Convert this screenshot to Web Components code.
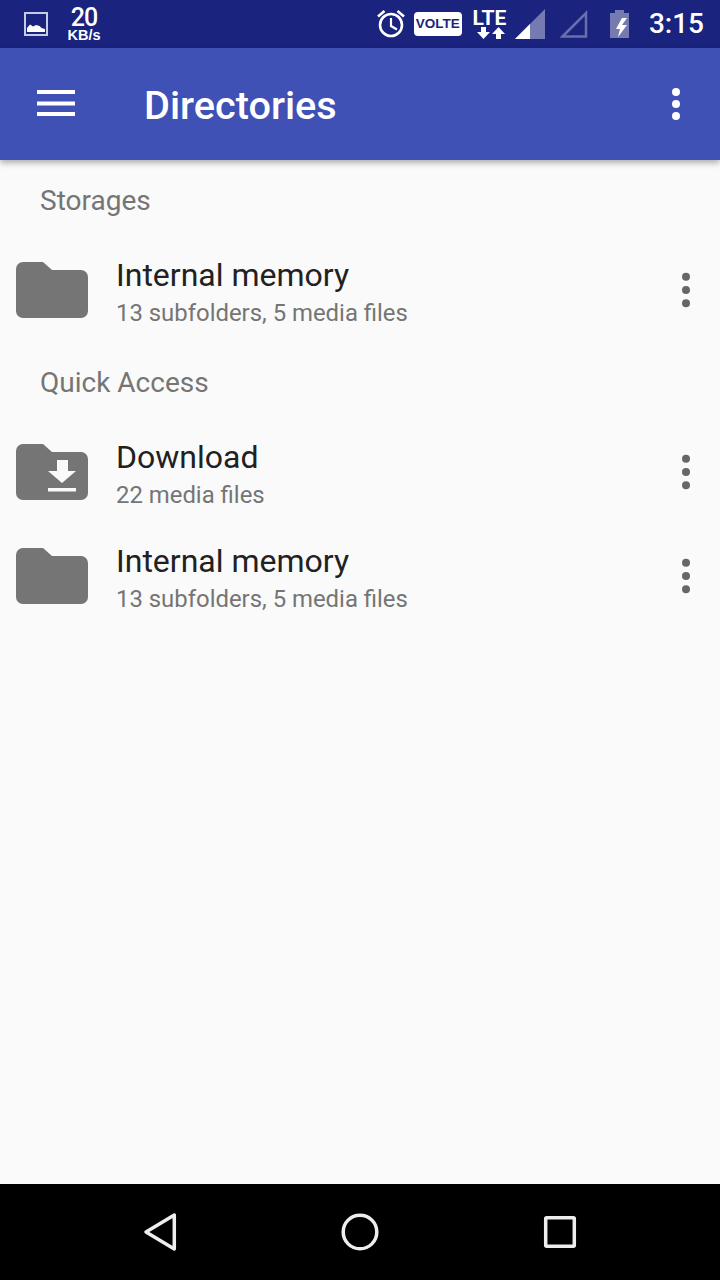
<!DOCTYPE html>
<html>
<head>
<meta charset="utf-8">
<title>Directories</title>
<style>
    html, body {
        margin: 0;
        padding: 0;
    }

    body {
        background: #fafafa;
        display: flex;
        flex-direction: column;
        font-family: Roboto, "Noto Sans", sans-serif;
        height: 1280px;
        overflow: hidden;
        width: 720px;
    }
</style>
</head>
<body>
    <status-bar></status-bar>
    <app-bar>Directories</app-bar>
    <dir-list>
        <section-label>Storages</section-label>
        <folder-row subtitle="13 subfolders, 5 media files">Internal memory</folder-row>
        <section-label>Quick Access</section-label>
        <folder-row icon="download" subtitle="22 media files">Download</folder-row>
        <folder-row subtitle="13 subfolders, 5 media files">Internal memory</folder-row>
    </dir-list>
    <nav-bar></nav-bar>

<script>
class StatusBar extends HTMLElement {
    constructor () {
        super()
        const shadowRoot = this.attachShadow({mode: 'open'})
        shadowRoot.innerHTML = this.render()
    }

    style () {
        return `
            <style>
                :host {
                    align-items: center;
                    background: #1a237e;
                    color: #fff;
                    display: flex;
                    flex: none;
                    height: 48px;
                }

                svg {
                    display: block;
                    flex: none;
                }

                .speed {
                    align-items: center;
                    display: flex;
                    flex-direction: column;
                    margin-left: 19px;
                    width: 34px;
                }

                .speed b {
                    font-size: 25px;
                    font-weight: 500;
                    letter-spacing: -1px;
                    line-height: 21px;
                }

                .speed small {
                    font-family: "Liberation Sans", sans-serif;
                    font-size: 14.500px;
                    font-weight: 700;
                    line-height: 14px;
                }

                .right {
                    align-items: center;
                    display: flex;
                    margin-left: auto;
                    padding-right: 16px;
                }

                .volte {
                    background: #fff;
                    border-radius: 4px;
                    box-sizing: border-box;
                    color: #1a237e;
                    font-family: "Liberation Sans", sans-serif;
                    font-size: 13.500px;
                    font-weight: 700;
                    height: 24px;
                    line-height: 24px;
                    margin-left: 9px;
                    text-align: center;
                    width: 48px;
                }

                .lte {
                    display: flex;
                    flex-direction: column;
                    margin-left: 10px;
                    width: 35px;
                }

                .lte span {
                    font-size: 21px;
                    font-weight: 700;
                    line-height: 18px;
                    text-align: center;
                }

                .time {
                    font-size: 28px;
                    font-weight: 500;
                    line-height: 32px;
                    margin-left: 19px;
                }
            </style>
        `
    }

    render () {
        return `
            ${this.style()}
            <svg style="margin-left:24px" width="24" height="24" viewBox="0 0 24 24">
                <rect x="1" y="1" width="22" height="22" fill="none" stroke="#c5cae9" stroke-width="2"/>
                <path d="M3 20v-4l3-3.500 3 2 3-1.500 3.500 1 2 2 3.500 1v3z" fill="#fff"/>
            </svg>
            <div class="speed"><b>20</b><small>KB/s</small></div>
            <div class="right">
                <svg width="28" height="28" viewBox="0 0 28 28" fill="none" stroke="#fff">
                    <circle cx="14" cy="15" r="11" stroke-width="2.600"/>
                    <path d="M14 8v8l6 3.500" stroke-width="2.200"/>
                    <path d="M1 6.500 7.500 1M27 6.500 20.500 1" stroke-width="2.600"/>
                </svg>
                <span class="volte">VOLTE</span>
                <div class="lte">
                    <span>LTE</span>
                    <svg width="35" height="13" viewBox="0 0 35 13" fill="#fff">
                        <path d="M9 0h5v5h4l-6.500 7L5 5h4z"/>
                        <path d="M24 12h5V7h4L26.500 0 20 7h4z"/>
                    </svg>
                </div>
                <svg style="margin-left:8px" width="30" height="30" viewBox="0 0 30 30" fill="#fff">
                    <path d="M0 30 30 0v30z" opacity=".4"/>
                    <path d="M0 30 15 15v15z"/>
                </svg>
                <svg style="margin-left:14px" width="30" height="30" viewBox="0 0 30 30" fill="none">
                    <path d="M3.500 27.500 27 4v23.500z" stroke="#fff" stroke-width="2.500" opacity=".35"/>
                </svg>
                <svg style="margin-left:21px" width="20" height="28" viewBox="0 0 20 28" fill="#fff">
                    <path d="M5 0h9v3h5v25H0V3h5z" opacity=".4"/>
                    <path d="M12 8 6 19h4l-2 8 9-12h-5l5-7z"/>
                </svg>
                <span class="time">3:15</span>
            </div>
        `
    }
}

class AppBar extends HTMLElement {
    constructor () {
        super()
        const shadowRoot = this.attachShadow({mode: 'open'})
        shadowRoot.innerHTML = this.render()
    }

    style () {
        return `
            <style>
                :host {
                    align-items: center;
                    background: #3f51b5;
                    box-shadow: 0 3px 6px rgba(0,0,0,.3);
                    color: #fff;
                    display: flex;
                    flex: none;
                    height: 112px;
                    position: relative;
                    z-index: 1;
                }

                svg {
                    display: block;
                    flex: none;
                }

                .title {
                    font-size: 39.700px;
                    font-weight: 500;
                    line-height: 48px;
                    margin-left: 69px;
                    margin-top: 4px;
                }

                .more {
                    margin-left: auto;
                    margin-right: 40px;
                }
            </style>
        `
    }

    render () {
        return `
            ${this.style()}
            <svg style="margin:0 0 2px 37px" width="38" height="26" viewBox="0 0 38 26" fill="#fff">
                <rect y="0" width="38" height="4"/>
                <rect y="11.500" width="38" height="4"/>
                <rect y="22" width="38" height="4"/>
            </svg>
            <div class="title"><slot></slot></div>
            <svg class="more" width="8" height="32" viewBox="0 0 8 32" fill="#fff">
                <circle cx="4" cy="4" r="4"/>
                <circle cx="4" cy="16" r="4"/>
                <circle cx="4" cy="28" r="4"/>
            </svg>
        `
    }
}

class DirList extends HTMLElement {
    constructor () {
        super()
        const shadowRoot = this.attachShadow({mode: 'open'})
        shadowRoot.innerHTML = `
            <style>
                :host {
                    background: #fafafa;
                    display: flex;
                    flex: 1;
                    flex-direction: column;
                }
            </style>
            <slot></slot>
        `
    }
}

class SectionLabel extends HTMLElement {
    constructor () {
        super()
        const shadowRoot = this.attachShadow({mode: 'open'})
        shadowRoot.innerHTML = `
            <style>
                :host {
                    align-items: center;
                    color: #757575;
                    display: flex;
                    font-size: 28px;
                    height: 80px;
                    margin-bottom: -2px;
                    padding-left: 40px;
                }
            </style>
            <slot></slot>
        `
    }
}

class FolderRow extends HTMLElement {
    constructor () {
        super()
        const shadowRoot = this.attachShadow({mode: 'open'})
        this.props = {
            'icon': this.getAttribute('icon'),
            'subtitle': this.getAttribute('subtitle')
        }
        shadowRoot.innerHTML = this.render()
    }

    style () {
        return `
            <style>
                :host {
                    align-items: center;
                    display: flex;
                    height: 104px;
                    padding-left: 16px;
                }

                svg {
                    display: block;
                    flex: none;
                }

                .text {
                    display: flex;
                    flex-direction: column;
                    margin-left: 28px;
                    padding-top: 6px;
                }

                .title {
                    color: #212121;
                    font-size: 32px;
                    line-height: 40px;
                }

                .subtitle {
                    color: #757575;
                    font-size: 23.900px;
                    line-height: 36px;
                }

                .more {
                    margin-left: auto;
                    margin-right: 29px;
                }
            </style>
        `
    }

    glyph () {
        if (this.props.icon !== 'download') return ''
        return `
            <path d="M41 16h11v11h8L46 39 32 27h9z" fill="#fafafa"/>
            <rect x="32" y="44" width="28" height="3.500" fill="#fafafa"/>
        `
    }

    render () {
        return `
            ${this.style()}
            <svg width="72" height="56" viewBox="0 0 72 56">
                <path d="M7 0h20l9 8h29a7 7 0 0 1 7 7v34a7 7 0 0 1-7 7H7a7 7 0 0 1-7-7V7a7 7 0 0 1 7-7z" fill="#757575"/>
                ${this.glyph()}
            </svg>
            <div class="text">
                <div class="title"><slot></slot></div>
                <div class="subtitle">${this.props.subtitle}</div>
            </div>
            <svg class="more" width="10" height="36" viewBox="0 0 10 36" fill="#666">
                <circle cx="5" cy="4.700" r="4"/>
                <circle cx="5" cy="18" r="4"/>
                <circle cx="5" cy="31.300" r="4"/>
            </svg>
        `
    }
}

class NavBar extends HTMLElement {
    constructor () {
        super()
        const shadowRoot = this.attachShadow({mode: 'open'})
        shadowRoot.innerHTML = `
            <style>
                :host {
                    align-items: center;
                    background: #000;
                    display: flex;
                    flex: none;
                    gap: 160px;
                    height: 96px;
                    justify-content: center;
                }

                svg {
                    display: block;
                }
            </style>
            <svg width="40" height="40" viewBox="0 0 40 40" fill="none" stroke="#eee" stroke-width="3.500" stroke-linejoin="round">
                <path d="M6 20 34.300 3v34z"/>
            </svg>
            <svg width="40" height="40" viewBox="0 0 40 40" fill="none" stroke="#eee" stroke-width="3.500">
                <circle cx="20" cy="20" r="16.800"/>
            </svg>
            <svg width="40" height="40" viewBox="0 0 40 40" fill="none" stroke="#eee" stroke-width="3.500" stroke-linejoin="round">
                <rect x="5.700" y="5.700" width="28.600" height="28.600" rx="1"/>
            </svg>
        `
    }
}

window.customElements.define('status-bar', StatusBar)
window.customElements.define('app-bar', AppBar)
window.customElements.define('dir-list', DirList)
window.customElements.define('section-label', SectionLabel)
window.customElements.define('folder-row', FolderRow)
window.customElements.define('nav-bar', NavBar)
</script>
</body>
</html>
